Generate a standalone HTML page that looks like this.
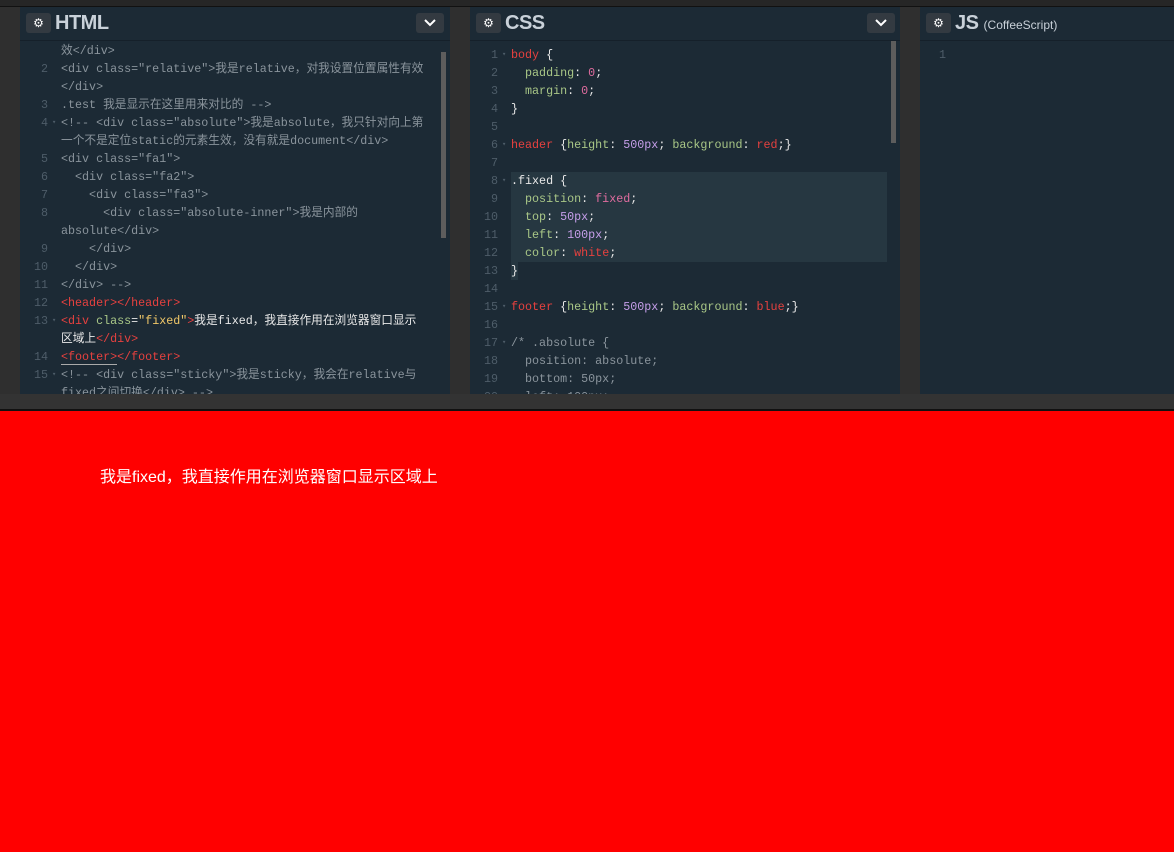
<!DOCTYPE html>
<html><head><meta charset="utf-8"><style>
*{margin:0;padding:0;box-sizing:border-box}
body{width:1174px;height:852px;background:#f00;position:relative;overflow:hidden;font-family:"Liberation Sans","Noto Sans CJK SC",sans-serif}
#top{position:absolute;left:0;top:0;width:1174px;height:411px;background:#2f2f2f}
#top:before{content:"";position:absolute;left:0;top:0;width:1174px;height:6px;background:#262626;border-bottom:1px solid #111}
.pane{position:absolute;top:7px;height:387px;background:#1c2a35;overflow:hidden}
.hd{position:absolute;left:0;top:0;right:0;height:34px;border-bottom:1px solid #15202a}
.gear{position:absolute;left:6px;top:6px;width:25px;height:20px;background:#333a41;border-radius:3px;color:#fff;font-size:12px;text-align:center;line-height:20px}
.ttl{position:absolute;left:35px;top:5px;font-size:20px;font-weight:bold;color:#c9d1d9;letter-spacing:-0.5px}
.dd{position:absolute;top:6px;width:28px;height:20px;background:#333a41;border-radius:3px}
.dd svg{position:absolute;left:8px;top:6px}
.code{position:absolute;left:0;right:0;top:34px;bottom:0;font-family:"Liberation Mono","Noto Sans CJK SC",monospace;font-size:11.7px;color:#8a949c}
.r{position:absolute;left:0;height:18px;line-height:18px;white-space:pre}
.n{position:absolute;width:28px;text-align:right;color:#4e5d69}
.t{position:absolute}
.f{position:absolute;font-size:7px;color:#4e5d69}
.red{color:#e6413f}.grn{color:#a9c787}.yel{color:#f1c868}.wh{color:#e8e8e8}.pk{color:#e06c9f}.pur{color:#c59ee9}
.sb{position:absolute;width:5px;background:#5d5d5d}
#bar{position:absolute;left:0;top:394px;width:1174px;height:17px;background:#333;border-bottom:2px solid #111}
#out{position:absolute;left:100px;top:463px;color:#fff;font-size:16px}
</style></head><body>
<div id="top"></div>

<div class="pane" style="left:20px;width:430px">
 <div class="hd"><div class="gear">⚙</div><div class="ttl">HTML</div>
 <div class="dd" style="left:396px"><svg width="12" height="8"><path d="M1 1l5 5 5-5" stroke="#fff" stroke-width="2" fill="none"/></svg></div></div>
 <div class="code" style="top:36px">
  <div class="r" style="top:-1px"><span class="t" style="left:41px">效&lt;/div&gt;</span></div>
  <div class="r" style="top:17px"><span class="n">2</span><span class="t" style="left:41px">&lt;div class="relative"&gt;我是relative，对我设置位置属性有效</span></div>
  <div class="r" style="top:35px"><span class="t" style="left:41px">&lt;/div&gt;</span></div>
  <div class="r" style="top:53px"><span class="n">3</span><span class="t" style="left:41px">.test 我是显示在这里用来对比的 --&gt;</span></div>
  <div class="r" style="top:71px"><span class="n">4</span><span class="f" style="left:32px">▾</span><span class="t" style="left:41px">&lt;!-- &lt;div class="absolute"&gt;我是absolute，我只针对向上第</span></div>
  <div class="r" style="top:89px"><span class="t" style="left:41px">一个不是定位static的元素生效，没有就是document&lt;/div&gt;</span></div>
  <div class="r" style="top:107px"><span class="n">5</span><span class="t" style="left:41px">&lt;div class="fa1"&gt;</span></div>
  <div class="r" style="top:125px"><span class="n">6</span><span class="t" style="left:41px">  &lt;div class="fa2"&gt;</span></div>
  <div class="r" style="top:143px"><span class="n">7</span><span class="t" style="left:41px">    &lt;div class="fa3"&gt;</span></div>
  <div class="r" style="top:161px"><span class="n">8</span><span class="t" style="left:41px">      &lt;div class="absolute-inner"&gt;我是内部的</span></div>
  <div class="r" style="top:179px"><span class="t" style="left:41px">absolute&lt;/div&gt;</span></div>
  <div class="r" style="top:197px"><span class="n">9</span><span class="t" style="left:41px">    &lt;/div&gt;</span></div>
  <div class="r" style="top:215px"><span class="n">10</span><span class="t" style="left:41px">  &lt;/div&gt;</span></div>
  <div class="r" style="top:233px"><span class="n">11</span><span class="t" style="left:41px">&lt;/div&gt; --&gt;</span></div>
  <div class="r" style="top:251px"><span class="n">12</span><span class="t red" style="left:41px">&lt;header&gt;&lt;/header&gt;</span></div>
  <div class="r" style="top:269px"><span class="n">13</span><span class="f" style="left:32px">▾</span><span class="t" style="left:41px"><span class="red">&lt;div</span> <span class="grn">class</span><span class="wh">=</span><span class="yel">"fixed"</span><span class="red">&gt;</span><span class="wh">我是fixed，我直接作用在浏览器窗口显示</span></span></div>
  <div class="r" style="top:287px"><span class="t" style="left:41px"><span class="wh">区域上</span><span class="red">&lt;/div&gt;</span></span></div>
  <div class="r" style="top:305px"><span class="n">14</span><span class="t red" style="left:41px"><span style="border-bottom:1px solid #aaa">&lt;footer&gt;</span>&lt;/footer&gt;</span></div>
  <div class="r" style="top:323px"><span class="n">15</span><span class="f" style="left:32px">▾</span><span class="t" style="left:41px">&lt;!-- &lt;div class="sticky"&gt;我是sticky，我会在relative与</span></div>
  <div class="r" style="top:341px"><span class="t" style="left:41px">fixed之间切换&lt;/div&gt; --&gt;</span></div>
 </div>
 <div class="sb" style="left:421px;top:45px;height:186px"></div>
</div>

<div class="pane" style="left:470px;width:430px">
 <div class="hd"><div class="gear">⚙</div><div class="ttl">CSS</div>
 <div class="dd" style="left:397px"><svg width="12" height="8"><path d="M1 1l5 5 5-5" stroke="#fff" stroke-width="2" fill="none"/></svg></div></div>
 <div class="code" style="top:35px">
  <div style="position:absolute;left:41px;top:130px;width:376px;height:90px;background:#263741"></div>
  <div style="position:absolute;left:41px;top:220px;width:7px;height:18px;background:#263741"></div>
  <div class="r" style="top:4px"><span class="n">1</span><span class="f" style="left:32px">▾</span><span class="t" style="left:41px"><span class="red">body</span> <span class="wh">{</span></span></div>
  <div class="r" style="top:22px"><span class="n">2</span><span class="t" style="left:41px">  <span class="grn">padding</span><span class="wh">:</span> <span class="pk">0</span><span class="wh">;</span></span></div>
  <div class="r" style="top:40px"><span class="n">3</span><span class="t" style="left:41px">  <span class="grn">margin</span><span class="wh">:</span> <span class="pk">0</span><span class="wh">;</span></span></div>
  <div class="r" style="top:58px"><span class="n">4</span><span class="t wh" style="left:41px">}</span></div>
  <div class="r" style="top:76px"><span class="n">5</span></div>
  <div class="r" style="top:94px"><span class="n">6</span><span class="f" style="left:32px">▾</span><span class="t" style="left:41px"><span class="red">header</span> <span class="wh">{</span><span class="grn">height</span><span class="wh">:</span> <span class="pur">500px</span><span class="wh">;</span> <span class="grn">background</span><span class="wh">:</span> <span class="red">red</span><span class="wh">;}</span></span></div>
  <div class="r" style="top:112px"><span class="n">7</span></div>
  <div class="r" style="top:130px"><span class="n">8</span><span class="f" style="left:32px">▾</span><span class="t wh" style="left:41px">.fixed {</span></div>
  <div class="r" style="top:148px"><span class="n">9</span><span class="t" style="left:41px">  <span class="grn">position</span><span class="wh">:</span> <span class="pk">fixed</span><span class="wh">;</span></span></div>
  <div class="r" style="top:166px"><span class="n">10</span><span class="t" style="left:41px">  <span class="grn">top</span><span class="wh">:</span> <span class="pur">50px</span><span class="wh">;</span></span></div>
  <div class="r" style="top:184px"><span class="n">11</span><span class="t" style="left:41px">  <span class="grn">left</span><span class="wh">:</span> <span class="pur">100px</span><span class="wh">;</span></span></div>
  <div class="r" style="top:202px"><span class="n">12</span><span class="t" style="left:41px">  <span class="grn">color</span><span class="wh">:</span> <span class="red">white</span><span class="wh">;</span></span></div>
  <div class="r" style="top:220px"><span class="n">13</span><span class="t wh" style="left:41px">}</span></div>
  <div class="r" style="top:238px"><span class="n">14</span></div>
  <div class="r" style="top:256px"><span class="n">15</span><span class="f" style="left:32px">▾</span><span class="t" style="left:41px"><span class="red">footer</span> <span class="wh">{</span><span class="grn">height</span><span class="wh">:</span> <span class="pur">500px</span><span class="wh">;</span> <span class="grn">background</span><span class="wh">:</span> <span class="red">blue</span><span class="wh">;}</span></span></div>
  <div class="r" style="top:274px"><span class="n">16</span></div>
  <div class="r" style="top:292px"><span class="n">17</span><span class="f" style="left:32px">▾</span><span class="t" style="left:41px">/* .absolute {</span></div>
  <div class="r" style="top:310px"><span class="n">18</span><span class="t" style="left:41px">  position: absolute;</span></div>
  <div class="r" style="top:328px"><span class="n">19</span><span class="t" style="left:41px">  bottom: 50px;</span></div>
  <div class="r" style="top:346px"><span class="n">20</span><span class="t" style="left:41px">  left: 100px;</span></div>
 </div>
 <div class="sb" style="left:421px;top:34px;height:102px"></div>
</div>

<div class="pane" style="left:920px;width:254px">
 <div class="hd"><div class="gear">⚙</div><div class="ttl">JS <span style="font-size:12px;font-weight:normal;letter-spacing:0">(CoffeeScript)</span></div></div>
 <div class="code" style="top:35px"><div class="r" style="top:4px"><span class="n" style="width:26px">1</span></div></div>
</div>

<div id="bar"></div>
<div id="out">我是fixed，我直接作用在浏览器窗口显示区域上</div>
</body></html>
